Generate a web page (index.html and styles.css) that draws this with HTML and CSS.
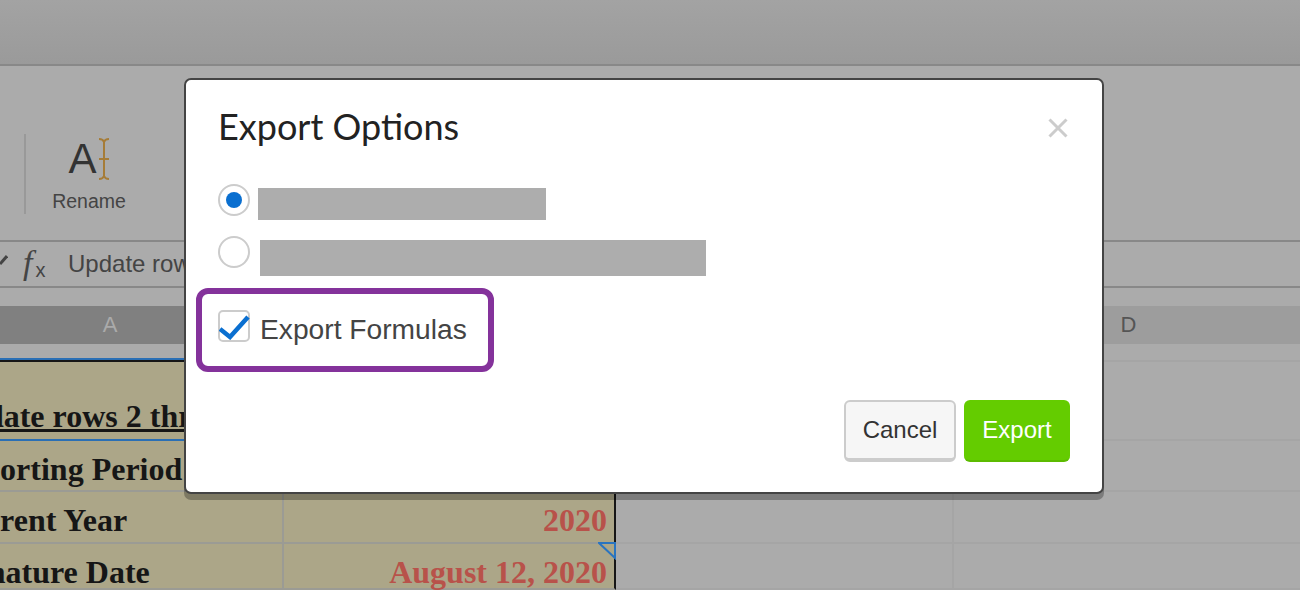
FILE: index.html
```html
<!DOCTYPE html>
<html lang="en">
<head>
  <meta charset="UTF-8">
  <title>Export Options</title>
  <link rel="stylesheet" href="styles.css">
</head>
<body>
  <div class="top-bar"></div>

  <!-- Ribbon -->
  <div class="ribbon">
    <div class="ribbon-divider"></div>
    <div class="ribbon-btn">
      <div class="rename-icon">
        <span class="rename-a">A</span>
        <svg class="rename-cursor" width="12" height="42" viewBox="0 0 12 42">
          <path d="M1 1 Q5 1 6 4 Q7 1 11 1 M6 4 V38 M1 41 Q5 41 6 38 Q7 41 11 41 M1 21 H11" fill="none" stroke="#a67c37" stroke-width="2"/>
        </svg>
      </div>
      <div class="ribbon-label">Rename</div>
    </div>
  </div>

  <!-- Formula bar -->
  <div class="formula-bar">
    <svg class="pencil" width="8" height="12" viewBox="0 0 8 12">
      <path d="M0 10 L7 2" stroke="#444" stroke-width="3"/>
    </svg>
    <span class="fx">f<span class="fx-x">x</span></span>
    <span class="formula-text">Update rows 2 through 5</span>
  </div>

  <div class="gap"></div>

  <!-- Column headers -->
  <div class="col-headers">
    <div class="col-head col-head-on">A</div>
    <div class="col-head col-head-on">B</div>
    <div class="col-head">C</div>
    <div class="col-head">D</div>
  </div>
  <div class="row-gap"></div>

  <!-- Sheet -->
  <div class="sheet">
    <div class="cell tan first-row"></div>
    <div class="cell tan first-row edge"></div>
    <div class="cell first-row"></div>
    <div class="cell first-row"></div>

    <div class="cell tan label blue-row"><u>Update rows 2 through 5</u></div>
    <div class="cell tan blue-row edge"></div>
    <div class="cell"></div>
    <div class="cell"></div>

    <div class="cell tan label">Reporting Period</div>
    <div class="cell tan value edge"></div>
    <div class="cell"></div>
    <div class="cell"></div>

    <div class="cell tan label">Current Year</div>
    <div class="cell tan value edge">2020</div>
    <div class="cell"></div>
    <div class="cell"></div>

    <div class="cell tan label">Signature Date</div>
    <div class="cell tan value edge">August 12, 2020
      <svg class="comment-mark" width="18" height="18" viewBox="0 0 18 18">
        <path d="M1 1 H17 V16 Z" fill="#aca688" stroke="#2a74c0" stroke-width="2"/>
      </svg>
    </div>
    <div class="cell"></div>
    <div class="cell"></div>
  </div>

  <!-- Modal -->
  <div class="modal">
    <div class="modal-head">
      <div class="modal-title">Export Options</div>
      <svg class="modal-close" width="20" height="20" viewBox="0 0 20 20">
        <path d="M1.5 1.5 L18.5 18.5 M18.5 1.5 L1.5 18.5" stroke="#ccc" stroke-width="3"/>
      </svg>
    </div>
    <div class="option first-option">
      <span class="radio radio-on"></span>
      <span class="redacted redacted-one"></span>
    </div>
    <div class="option second-option">
      <span class="radio"></span>
      <span class="redacted redacted-two"></span>
    </div>
    <div class="highlight">
      <span class="checkbox">
        <svg width="32" height="30" viewBox="0 0 32 30">
          <path d="M1 19 L11 27 L29 7" fill="none" stroke="#0a6fd0" stroke-width="4.5"/>
        </svg>
      </span>
      <span class="check-label">Export Formulas</span>
    </div>
    <div class="modal-foot">
      <button class="btn btn-cancel">Cancel</button>
      <button class="btn btn-export">Export</button>
    </div>
  </div>
</body>
</html>
```

FILE: styles.css
```css
* {
  box-sizing: border-box;
}

html, body {
  height: 590px;
  overflow: hidden;
}

body {
  margin: 0;
  background-color: #ababab;
  font-family: "Liberation Sans", Arial, sans-serif;
  color: #444;
}

.top-bar {
  height: 66px;
  background: linear-gradient(#a3a3a3, #9a9a9a);
  border-bottom: 2px solid #888;
}

.ribbon {
  height: 176px;
  display: flex;
  align-items: flex-start;
  padding-top: 68px;
  border-bottom: 2px solid #888;
}

.ribbon-divider {
  width: 2px;
  height: 80px;
  margin-left: 24px;
  background-color: #999;
}

.ribbon-btn {
  width: 78px;
  margin-left: 24px;
  text-align: center;
}

.rename-icon {
  display: flex;
  justify-content: center;
  height: 46px;
  margin-top: 4px;
}

.rename-a {
  font-size: 42px;
  line-height: 42px;
  color: #333;
}

.rename-cursor {
  margin-left: 1px;
}

.ribbon-label {
  font-size: 19.5px;
  margin-top: 6px;
}

.formula-bar {
  height: 46px;
  display: flex;
  align-items: center;
  border-bottom: 2px solid #888;
  font-size: 24px;
}

.pencil {
  margin: 0 15px 8px 0;
}

.fx {
  width: 45px;
  padding-top: 4px;
  font-family: "Liberation Serif", serif;
  font-style: italic;
  font-size: 34px;
  line-height: 32px;
}

.fx-x {
  margin-left: 3px;
  font-family: "Liberation Sans", sans-serif;
  font-style: normal;
  font-size: 20px;
  vertical-align: -3px;
}

.gap {
  height: 18px;
}

.col-headers {
  display: grid;
  grid-template-columns: 346px 333px 338px 349px;
  height: 36px;
  margin-left: -63px;
}

.col-head {
  background-color: #9d9d9d;
  text-align: center;
  font-size: 22px;
  line-height: 38px;
  color: #555;
}

.col-head-on {
  background-color: #808080;
  color: #aaa;
}

.row-gap {
  height: 18px;
}

.sheet {
  display: grid;
  grid-template-columns: 347px 332px 338px 349px;
  grid-template-rows: 28px 53px 51px 52px 46px;
  margin-left: -63px;
  font-family: "Liberation Serif", "Times New Roman", serif;
  font-weight: bold;
  font-size: 32px;
}

.cell {
  border-bottom: 2px solid #a5a5a5;
  border-right: 2px solid #a5a5a5;
  white-space: nowrap;
  position: relative;
}

.tan {
  background-color: #aca688;
  border-color: #9b9b94;
  color: #161616;
}

.label {
  padding-left: 8px;
  line-height: 56px;
}

.first-row {
  border-bottom: 0;
  border-top: 2px solid #a5a5a5;
}

.first-row.tan {
  border-top-color: #161616;
  box-shadow: 0 -2px 0 #2a6fb5;
}

.blue-row {
  border-bottom: 2px solid #2a6fb5;
  line-height: 56px;
}

.value {
  text-align: right;
  padding-right: 7px;
  color: #b8524a;
  line-height: 56px;
}

.tan.edge {
  border-right: 2px solid #161616;
}

.comment-mark {
  position: absolute;
  top: -2px;
  right: -2px;
}

/* Modal sits over the sheet */
.modal {
  position: absolute;
  left: 184px;
  top: 78px;
  width: 920px;
  height: 416px;
  padding: 0 32px;
  background-color: #fff;
  border: 2px solid #444;
  border-radius: 7px;
  box-shadow: 0 6px 0 rgba(0, 0, 0, 0.27);
}

.modal-head {
  display: flex;
  justify-content: space-between;
  align-items: center;
  height: 92px;
}

.modal-title {
  font-family: Lato, sans-serif;
  font-size: 36px;
  color: #222;
}

.modal-close {
  margin: 3px 2px 0 0;
}

.option {
  display: flex;
  align-items: flex-start;
}

.first-option {
  height: 36px;
  margin-top: 12px;
}

.second-option {
  height: 40px;
  margin-top: 16px;
}

.radio {
  width: 32px;
  height: 32px;
  border: 2px solid #ccc;
  border-radius: 50%;
  display: flex;
  align-items: center;
  justify-content: center;
}

.radio-on::after {
  content: "";
  width: 16px;
  height: 16px;
  border-radius: 50%;
  background-color: #0a6fd0;
}

.redacted {
  margin-top: 4px;
  background-color: #adadad;
}

.redacted-one {
  width: 288px;
  height: 32px;
  margin-left: 8px;
}

.redacted-two {
  width: 446px;
  height: 36px;
  margin-left: 10px;
}

.highlight {
  display: flex;
  align-items: center;
  width: 298px;
  height: 84px;
  margin: 12px 0 0 -22px;
  padding-left: 16px;
  border: 6px solid #84329b;
  border-radius: 12px;
}

.checkbox {
  position: relative;
  width: 32px;
  height: 32px;
  margin-bottom: 8px;
  border: 2px solid #ccc;
  border-radius: 5px;
}

.checkbox svg {
  position: absolute;
  left: -1px;
  top: -2px;
}

.check-label {
  margin: 0 0 2px 10px;
  font-size: 28.2px;
  color: #444;
}

.modal-foot {
  display: flex;
  justify-content: flex-end;
  gap: 8px;
  margin-top: 28px;
}

.btn {
  height: 62px;
  font-family: "Liberation Sans", Arial, sans-serif;
  font-size: 24px;
  border-radius: 6px;
  padding: 0;
}

.btn-cancel {
  width: 112px;
  background-color: #f6f6f6;
  border: 2px solid #ccc;
  border-bottom-width: 4px;
  color: #333;
}

.btn-export {
  width: 106px;
  background-color: #64cc00;
  border: 0;
  border-bottom: 2px solid #5cbb00;
  color: #fff;
}
```
